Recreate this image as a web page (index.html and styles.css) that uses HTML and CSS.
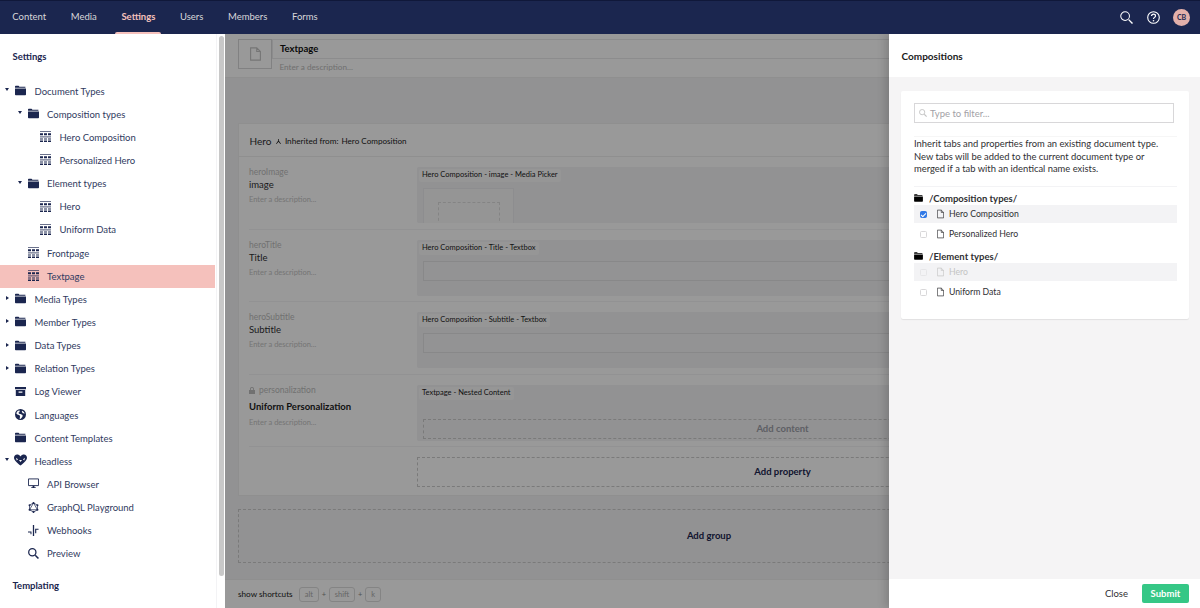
FILE: index.html

```html
<!doctype html>
<html lang="en">
<head>
<meta charset="utf-8">
<meta name="viewport" content="width=device-width, initial-scale=1">
<title>Settings - Textpage</title>
<link rel="stylesheet" href="styles.css">
</head>
<body>

<svg class="sprite" xmlns="http://www.w3.org/2000/svg">
  <symbol id="i-folder" viewBox="0 0 11 10"><path d="M0 2.200V1.100C0 .6.300.3.800.3h2.600c.4 0 .6.200.8.600l.2.400h6v.9zM0 3h11v5.900c0 .5-.3.800-.8.800H.8c-.5 0-.8-.3-.8-.8z"/></symbol>
  <symbol id="i-doctype" viewBox="0 0 11 11"><path opacity=".65" d="M0 0h11v1.100H0zM0 5.300h11v1.100H0z"/><path d="M0 2.300h3v1.900H0zM4 2.300h3v1.900H4zM8 2.300h3v1.900H8zM0 7.600h3v1H0zM4 7.600h3v1H4zM8 7.600h3v1H8zM0 9.500h3v1.500H0zM4 9.500h3v1.500H4zM8 9.500h3v1.500H8z"/></symbol>
  <symbol id="i-archive" viewBox="0 0 11 10"><path fill-rule="evenodd" d="M0 .5h11v2.300H0zM.8 3.600h9.400v6H.8zM3.600 5v1.200h3.800V5z"/></symbol>
  <symbol id="i-globe" viewBox="0 0 12 12"><path fill-rule="evenodd" d="M6 0a6 6 0 1 1 0 12A6 6 0 0 1 6 0zM3 2 1.300 4.500 3 6.200l1.800.4.8 1.800-.7 2 1.200.4 2-2.400.2-1.900-2.400-1-1.400-.4L3.700 4l1.200-.6.300-1.800zM8 1.800 7.300 3l1.300 1.500 2.100.4A5 5 0 0 0 8 1.800z"/></symbol>
  <symbol id="i-heart" viewBox="0 0 13 11"><path fill-rule="evenodd" d="M6.500 2C5.600.6 4.300 0 3.100 0 1.300 0 0 1.400 0 3.200 0 6 3.600 8.700 6.500 11 9.400 8.700 13 6 13 3.200 13 1.400 11.700 0 9.900 0 8.700 0 7.400.6 6.500 2zM2 3.200l2 1.600L2.800 6zM11 3.200 9 4.800 10.200 6zM5 5.500h3L6.500 7.500z"/></symbol>
  <symbol id="i-monitor" viewBox="0 0 12 11"><path fill="none" stroke="currentColor" d="M.5.500h11v7.300H.5z"/><path d="M3.500 9.500h5v1h-5zM5 8h2v1.500H5z"/></symbol>
  <symbol id="i-graphql" viewBox="0 0 12 12"><path fill="none" stroke="currentColor" stroke-width=".8" d="M6 1 10.300 3.500v5L6 11 1.700 8.500v-5zM6 1 1.700 8.500h8.600z"/><circle cx="6" cy="1.200" r="1.100"/><circle cx="10.300" cy="3.500" r="1.100"/><circle cx="10.300" cy="8.500" r="1.100"/><circle cx="6" cy="10.800" r="1.100"/><circle cx="1.700" cy="8.500" r="1.100"/><circle cx="1.700" cy="3.500" r="1.100"/></symbol>
  <symbol id="i-hooks" viewBox="0 0 12 12"><path d="M5.300 0h1.400v12H5.300zM7.800 4h3.700v1.300H9V9H7.800zM0 7h3.800v3H2.700V8.300H0z"/></symbol>
  <symbol id="i-search" viewBox="0 0 14 14"><circle cx="5.500" cy="5.500" r="4.600" fill="none" stroke="currentColor" stroke-width="1.600"/><path d="M8.500 9.900 9.900 8.500 14 12.600 12.600 14z"/></symbol>
  <symbol id="i-search-thin" viewBox="0 0 14 14"><circle cx="5.500" cy="5.500" r="4.700" fill="none" stroke="currentColor" stroke-width="1.100"/><path d="M8.800 9.800 9.800 8.800 14 12.900 12.900 14z"/></symbol>
  <symbol id="i-help" viewBox="0 0 13 13"><circle cx="6.500" cy="6.500" r="5.800" fill="none" stroke="currentColor" stroke-width="1.100"/><path fill="none" stroke="currentColor" stroke-width="1.200" d="M4.500 5.100c0-1.200.9-1.900 2-1.900s2 .7 2 1.700c0 1.500-2 1.500-2 3.100"/><circle cx="6.500" cy="9.700" r=".8"/></symbol>
  <symbol id="i-file" viewBox="0 0 9 11"><path fill="none" stroke="currentColor" stroke-width=".9" d="M.5.500h5l3 3v7h-8zM5.500.5v3h3"/></symbol>
  <symbol id="i-inherit" viewBox="0 0 7 7"><path d="M3 0h1v2.300L7 6.500 6.200 7 3.500 4 .8 7 0 6.500 3 2.300z"/></symbol>
  <symbol id="i-lock" viewBox="0 0 7 8"><path d="M0 3.500h7V8H0zM1.200 3.500V2.200C1.200.9 2.200 0 3.500 0s2.300.9 2.300 2.200v1.300H4.800V2.200c0-.7-.6-1.200-1.300-1.200s-1.300.5-1.300 1.200v1.300z"/></symbol>
</svg>

<nav class="topbar">
  <ul class="sections">
    <li><a>Content</a></li>
    <li><a>Media</a></li>
    <li class="current"><a>Settings</a></li>
    <li><a>Users</a></li>
    <li><a>Members</a></li>
    <li><a>Forms</a></li>
  </ul>
  <div class="tools">
    <svg class="tool-search"><use href="#i-search-thin"/></svg>
    <svg class="tool-help"><use href="#i-help"/></svg>
    <span class="avatar">CB</span>
  </div>
</nav>

<div class="app">

  <aside class="sidebar">
    <div class="tree">
      <h3 class="tree-title">Settings</h3>
      <ul class="tree-list">
        <li class="node lvl0"><i class="caret open"></i><svg class="ico"><use href="#i-folder"/></svg>Document Types</li>
        <li class="node lvl1"><i class="caret open"></i><svg class="ico"><use href="#i-folder"/></svg>Composition types</li>
        <li class="node lvl2"><i class="caret"></i><svg class="ico"><use href="#i-doctype"/></svg>Hero Composition</li>
        <li class="node lvl2"><i class="caret"></i><svg class="ico"><use href="#i-doctype"/></svg>Personalized Hero</li>
        <li class="node lvl1"><i class="caret open"></i><svg class="ico"><use href="#i-folder"/></svg>Element types</li>
        <li class="node lvl2"><i class="caret"></i><svg class="ico"><use href="#i-doctype"/></svg>Hero</li>
        <li class="node lvl2"><i class="caret"></i><svg class="ico"><use href="#i-doctype"/></svg>Uniform Data</li>
        <li class="node lvl1"><i class="caret"></i><svg class="ico"><use href="#i-doctype"/></svg>Frontpage</li>
        <li class="node lvl1 active"><i class="caret"></i><svg class="ico"><use href="#i-doctype"/></svg>Textpage</li>
        <li class="node lvl0"><i class="caret shut"></i><svg class="ico"><use href="#i-folder"/></svg>Media Types</li>
        <li class="node lvl0"><i class="caret shut"></i><svg class="ico"><use href="#i-folder"/></svg>Member Types</li>
        <li class="node lvl0"><i class="caret shut"></i><svg class="ico"><use href="#i-folder"/></svg>Data Types</li>
        <li class="node lvl0"><i class="caret shut"></i><svg class="ico"><use href="#i-folder"/></svg>Relation Types</li>
        <li class="node lvl0"><i class="caret"></i><svg class="ico"><use href="#i-archive"/></svg>Log Viewer</li>
        <li class="node lvl0"><i class="caret"></i><svg class="ico"><use href="#i-globe"/></svg>Languages</li>
        <li class="node lvl0"><i class="caret"></i><svg class="ico"><use href="#i-folder"/></svg>Content Templates</li>
        <li class="node lvl0"><i class="caret open"></i><svg class="ico ico-heart"><use href="#i-heart"/></svg>Headless</li>
        <li class="node lvl1"><i class="caret"></i><svg class="ico"><use href="#i-monitor"/></svg>API Browser</li>
        <li class="node lvl1"><i class="caret"></i><svg class="ico"><use href="#i-graphql"/></svg>GraphQL Playground</li>
        <li class="node lvl1"><i class="caret"></i><svg class="ico"><use href="#i-hooks"/></svg>Webhooks</li>
        <li class="node lvl1"><i class="caret"></i><svg class="ico"><use href="#i-search"/></svg>Preview</li>
      </ul>
      <h3 class="tree-title tree-title-next">Templating</h3>
    </div>
    <div class="gutter"><div class="thumb"></div></div>
  </aside>

  <main class="main">
    <header class="doc-head">
      <div class="doc-icon"><svg><use href="#i-file"/></svg></div>
      <div class="doc-fields">
        <div class="doc-name">Textpage</div>
        <div class="doc-desc">Enter a description...</div>
      </div>
    </header>

    <div class="canvas">
      <section class="group">
        <div class="group-head">
          <span class="group-name">Hero</span>
          <svg class="inherit-ico"><use href="#i-inherit"/></svg>
          <span class="inherit-label">Inherited from:</span>
          <span class="inherit-from">Hero Composition</span>
        </div>

        <div class="prop">
          <div class="prop-label">
            <div class="alias">heroImage</div>
            <div class="prop-name">image</div>
            <div class="prop-desc">Enter a description...</div>
          </div>
          <div class="editor">
            <span class="tag">Hero Composition - image - Media Picker</span>
            <div class="picker"><div class="picker-inner"></div></div>
          </div>
        </div>

        <div class="prop">
          <div class="prop-label">
            <div class="alias">heroTitle</div>
            <div class="prop-name">Title</div>
            <div class="prop-desc">Enter a description...</div>
          </div>
          <div class="editor">
            <span class="tag">Hero Composition - Title - Textbox</span>
            <div class="textbox"></div>
          </div>
        </div>

        <div class="prop">
          <div class="prop-label">
            <div class="alias">heroSubtitle</div>
            <div class="prop-name">Subtitle</div>
            <div class="prop-desc">Enter a description...</div>
          </div>
          <div class="editor">
            <span class="tag">Hero Composition - Subtitle - Textbox</span>
            <div class="textbox"></div>
          </div>
        </div>

        <div class="prop">
          <div class="prop-label">
            <div class="alias"><svg class="lock-ico"><use href="#i-lock"/></svg>personalization</div>
            <div class="prop-name strong">Uniform Personalization</div>
            <div class="prop-desc">Enter a description...</div>
          </div>
          <div class="editor">
            <span class="tag">Textpage - Nested Content</span>
            <div class="add-content">Add content</div>
          </div>
        </div>

        <div class="prop-add">
          <div class="add-property">Add property</div>
        </div>
      </section>

      <div class="add-group">Add group</div>
    </div>

    <footer class="doc-foot">
      <span class="shortcuts">show shortcuts</span>
      <kbd>alt</kbd><span class="plus">+</span><kbd>shift</kbd><span class="plus">+</span><kbd>k</kbd>
    </footer>

    <div class="dim"></div>

    <section class="panel">
      <h2 class="panel-head">Compositions</h2>
      <div class="panel-body">
        <div class="panel-card">
          <div class="filter">
            <svg class="filter-ico"><use href="#i-search"/></svg>
            <span>Type to filter...</span>
          </div>
          <p class="intro">Inherit tabs and properties from an existing document type. New tabs will be added to the current document type or merged if a tab with an identical name exists.</p>
          <h4 class="folder"><svg><use href="#i-folder"/></svg>/Composition types/</h4>
          <ul class="comp-list">
            <li class="comp shaded"><span class="check checked"></span><svg class="file"><use href="#i-file"/></svg>Hero Composition</li>
            <li class="comp"><span class="check"></span><svg class="file"><use href="#i-file"/></svg>Personalized Hero</li>
          </ul>
          <h4 class="folder"><svg><use href="#i-folder"/></svg>/Element types/</h4>
          <ul class="comp-list">
            <li class="comp shaded disabled"><span class="check"></span><svg class="file"><use href="#i-file"/></svg>Hero</li>
            <li class="comp"><span class="check"></span><svg class="file"><use href="#i-file"/></svg>Uniform Data</li>
          </ul>
        </div>
      </div>
      <footer class="panel-foot">
        <span class="close">Close</span>
        <span class="submit">Submit</span>
      </footer>
    </section>
  </main>

</div>

</body>
</html>
```

FILE: styles.css

```css
* { box-sizing: border-box }
html, body { height: 100%; margin: 0 }
body { font-family: Lato, "Open Sans", sans-serif; font-size: 9.5px; color: #1b264f; background: #fff; overflow: hidden; display: flex; flex-direction: column }
ul { list-style: none; margin: 0; padding: 0 }
h2, h3, h4, p { margin: 0 }
.sprite { display: none }
svg { fill: currentColor; display: block; flex: none }

/* top bar */
.topbar { height: 34px; flex: none; background: #1b264f; border-top: 1px solid #10183a; display: flex; justify-content: space-between; color: #d8d7d9 }
.sections { display: flex }
.sections li { position: relative; padding: 0 12.300px; line-height: 32px; font-size: 9.5px }
.sections .current { color: #f5c1bc; font-weight: 700 }
.sections .current::after { content: ""; position: absolute; left: 6px; right: 7px; bottom: 0; height: 2.500px; background: #f5c1bc; border-radius: 2px 2px 0 0 }
.tools { display: flex; align-items: center; padding-right: 10px; color: #fff }
.tool-search { width: 13px; height: 13px; margin-right: 14px }
.tool-help { width: 13px; height: 13px; margin-right: 13px }
.avatar { width: 17px; height: 17px; border-radius: 50%; background: #e3b0aa; color: #1b264f; font-size: 7px; font-weight: 700; text-align: center; line-height: 17px }

.app { flex: 1; display: flex; min-height: 0 }

/* tree */
.sidebar { width: 225px; flex: none; display: flex; background: #fff; overflow: hidden }
.tree { width: 216px; flex: none }
.tree-title { font-size: 9.5px; font-weight: 700; line-height: 14px; padding: 16px 0 0 12.500px; height: 45.500px }
.tree-title-next { padding-top: 14px }
.node { height: 23.150px; display: flex; align-items: center; font-size: 9.5px; white-space: nowrap; color: #303a60 }
.lvl0 { padding-left: 3px }
.lvl1 { padding-left: 15.500px }
.lvl2 { padding-left: 28px }
.active { background: #f5c1bc; margin-right: 1px }
.caret { width: 12px; flex: none; height: 6px; position: relative }
.caret.open::before { content: ""; position: absolute; left: 2px; top: 0; border: 2.500px solid transparent; border-top: 3.500px solid #1b264f; border-bottom: 0 }
.caret.shut::before { content: ""; position: absolute; left: 2.500px; top: 0; border: 2.800px solid transparent; border-left: 3.500px solid #1b264f; border-right: 0 }
.ico { width: 11px; height: 11px; margin-right: 8.500px; color: #1b264f; margin-top: -1px }
.ico-heart { width: 13px; height: 12px; margin: -2px 7.500px 0 -1px }
.gutter { flex: 1; padding: 2px 0 0 2px; border-left: 1px solid #f3f3f5 }
.thumb { width: 4.500px; height: 540px; border-radius: 3px; background: #c8c8c8 }

/* main area, runs on under the panel */
.main { flex: 1; position: relative; display: flex; flex-direction: column; min-width: 0; background: #f3f3f5; overflow: hidden }
.doc-head { height: 44px; flex: none; background: #fff; display: flex; padding: 5px 13px 0; border-bottom: 1px solid #eee }
.doc-icon { width: 34px; height: 30px; border: 1px solid #d8d7d9; display: flex; align-items: center; justify-content: center; color: #c4c4c4 }
.doc-icon svg { width: 11px; height: 14px }
.doc-fields { flex: 1 }
.doc-name { height: 20px; border: 1px solid #e9e9eb; padding-left: 7px; line-height: 18px; font-weight: 700; font-size: 9.5px; color: #111 }
.doc-desc { padding: 3px 0 0 7.500px; font-size: 8.200px; color: #bbb }

.canvas { flex: 1; padding: 45px 20px 0 13px; min-height: 0 }
.group { height: 373px; background: #fff; border: 1px solid #eee; padding: 0 31px 0 10px }
.group-head { height: 33px; margin: 0 -31px 0 -10px; padding: 2px 0 0 10.500px; border-bottom: 1px solid #eee; display: flex; align-items: center }
.group-name { font-size: 10px; color: #303033 }
.inherit-ico { width: 5px; height: 5px; margin: 0 3.500px 0 5px; color: #1b1b1b }
.inherit-label { font-size: 8.200px; color: #1b1b1b; margin-right: 3px }
.inherit-from { font-size: 8.100px; color: #1b1b1b }

.prop { height: 72.500px; padding: 10px 0 6px; border-bottom: 1px solid #f3f3f5; display: flex }
.prop-label { width: 168px; flex: none }
.alias { display: flex; align-items: center; font-size: 8.500px; line-height: 11px; color: #bdbdbd }
.lock-ico { width: 6px; height: 7px; margin-right: 4px }
.prop-name { font-size: 9.500px; line-height: 14px; color: #303033 }
.prop-name.strong { font-weight: 700; color: #1b1b1b; padding-top: 4px }
.prop-desc { font-size: 7.500px; line-height: 11px; padding-top: 2px; color: #c4c4c4 }
.strong + .prop-desc { padding-top: 3px }
.editor { flex: 1; height: 56px; overflow: hidden; background: #f3f3f5; border-radius: 2px; padding: 2px 6px 0; position: relative }
.tag { position: absolute; left: 2px; top: 2px; height: 13px; line-height: 12px; padding: 0 3px; font-size: 7.500px; background: #fbfbfb; border-radius: 2px; color: #1b1b1b; white-space: nowrap }
.picker { margin-top: 19px; width: 91px; height: 60px; background: #f8f8f9; border: 1px solid #ececee; padding: 13px 0 0 14px }
.picker-inner { width: 62px; height: 40px; border: 1px dashed #ddd }
.textbox { margin-top: 19px; height: 20px; background: #f6f6f7; border: 1px solid #e3e3e5 }
.add-content { margin-top: 32px; height: 20px; border: 1px dashed #ccc; text-align: center; line-height: 18px; font-size: 9.500px; font-weight: 700; color: #9d9fa8 }
.prop-add { padding: 10px 0 0 168px }
.add-property { height: 30px; border: 1px dashed #ccc; text-align: center; line-height: 28px; font-size: 9.500px; font-weight: 700 }
.add-group { height: 54px; margin-top: 13px; border: 1px dashed #ccc; text-align: center; line-height: 52px; font-size: 9.500px; font-weight: 700 }

.doc-foot { height: 29px; flex: none; background: #fff; border-top: 1px solid #eee; display: flex; align-items: center; padding-left: 13px; font-size: 8.200px; color: #1b1b1b }
.shortcuts { margin-right: 6px }
kbd { font-family: inherit; font-size: 7.500px; height: 15px; line-height: 13px; border: 1px solid #ddd; border-radius: 3px; padding: 0 5px; color: #aaa }
.plus { width: 10px; text-align: center; font-size: 7.500px; color: #888 }

.dim { position: absolute; inset: 0; background: rgba(0, 0, 0, .4) }

/* compositions panel */
.panel { position: absolute; top: 0; right: 0; bottom: 0; width: 311px; background: #fff; display: flex; flex-direction: column; box-shadow: -4px 0 8px rgba(0, 0, 0, .15); color: #1b1b1b }
.panel-head { height: 43px; flex: none; font-size: 10px; font-weight: 700; line-height: 44px; padding-left: 12.500px; color: #1b1b1b }
.panel-body { flex: 1; background: #f5f4f5; padding: 14px 11px 0 12px; min-height: 0 }
.panel-card { background: #fff; height: 228px; padding: 12px 12px 0 13px; border-radius: 2px; box-shadow: 0 1px 1px rgba(0, 0, 0, .08) }
.filter { width: 260px; height: 20px; border: 1px solid #d8d7d9; display: flex; align-items: center; padding-left: 4px; font-size: 9.500px; color: #a2a1a6 }
.filter-ico { width: 8px; height: 8px; margin-right: 3px; color: #c4c4c4 }
.intro { margin-top: 13px; padding: 1px 0 10px; font-size: 9.400px; line-height: 12.600px; border-top: 1px solid #f6f6f6; border-bottom: 1px solid #f3f3f5; color: #303033; width: 263px }
.folder { display: flex; align-items: center; font-size: 9.500px; font-weight: 700; height: 13px; margin-top: 5px; color: #303033 }
.folder svg { width: 9px; height: 8px; color: #000; margin-right: 6px }
.comp-list + .folder { margin-top: 7px }
.comp { height: 18px; width: 263px; margin-bottom: 2px; display: flex; align-items: center; font-size: 8.700px; color: #303033 }
.comp-list .comp:last-child { margin-bottom: 0 }
.shaded { background: #f3f3f5 }
.disabled { color: #c4c4c4 }
.check { width: 7.500px; height: 7.500px; margin: 1px 10px 0 5.500px; border: 1px solid #d8d7d9; border-radius: 1.500px; background: #fff; position: relative }
.disabled .check { border-color: #e6e6e8; background: none }
.checked { background: #3179e6; border-color: #3179e6 }
.checked::after { content: ""; position: absolute; left: 1.500px; top: 0; width: 2px; height: 4px; border: solid #fff; border-width: 0 1px 1px 0; transform: rotate(45deg) }
.file { width: 7px; height: 10px; margin-right: 5px }
.panel-foot { height: 29px; flex: none; display: flex; align-items: center; justify-content: flex-end; padding-right: 11px; font-size: 9.500px }
.close { margin-right: 14px; color: #303033 }
.submit { width: 47px; height: 19px; line-height: 19px; text-align: center; border-radius: 2px; background: #35c786; color: #fff; font-weight: 700 }
```
